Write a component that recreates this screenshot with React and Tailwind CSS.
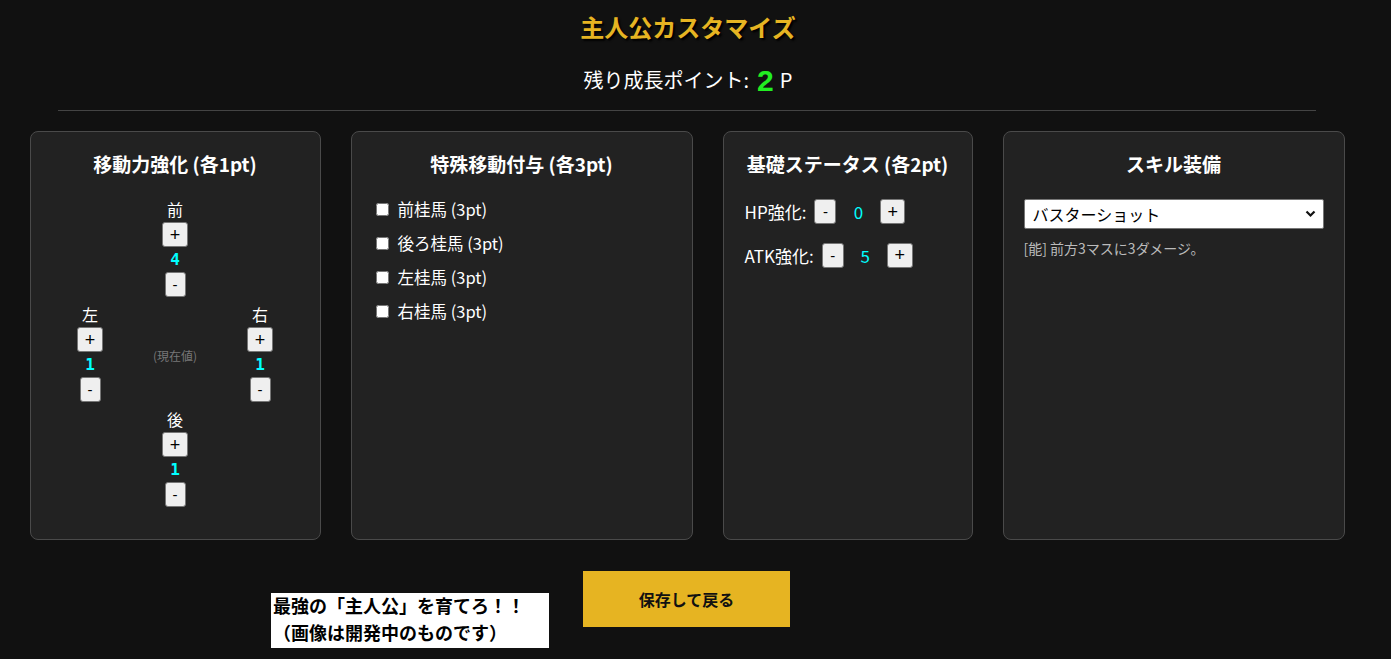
import React from "react";

const FONT = { fontFamily: '"Noto Sans CJK JP", "Noto Sans", sans-serif' };

function Btn({ children, w = "w-[26px]" }) {
  const plus = children === "+";
  return (
    <button
      className={`${w} h-[25px] flex items-center justify-center bg-[#efefef] border border-[#767676] rounded-[3px] ${plus ? "text-[18px]" : "text-[15px]"} leading-none text-black`}
      style={{ fontFamily: '"Liberation Sans", sans-serif' }}
    >
      {children}
    </button>
  );
}

function Dir({ label, value }) {
  return (
    <div className="flex flex-col items-center">
      <div className="text-[16px] leading-[20px] text-white">{label}</div>
      <div className="mt-[3px]"><Btn>+</Btn></div>
      <div className="h-[25px] flex items-center text-[16px] font-bold text-[#00ffff]" style={{ fontFamily: '"DejaVu Sans Mono", monospace' }}>{value}</div>
      <Btn w="w-[21px]">-</Btn>
    </div>
  );
}

function Card({ w, title, children }) {
  return (
    <div className={`${w} h-[409px] bg-[#222222] border border-[#4a4a4a] rounded-[8px] pt-[18px] flex flex-col`}>
      <h3 className="text-center text-[19px] leading-[28px] font-bold text-white">{title}</h3>
      {children}
    </div>
  );
}

export default function App() {
  return (
    <div className="w-full min-h-[659px] bg-[#111111] relative overflow-hidden" style={FONT}>
      <div className="w-[1376px] flex flex-col items-center">
        <h1 className="mt-[11px] text-[24px] leading-[32px] font-bold text-[#e6b422]" style={{ textShadow: "2px 2px 2px #000" }}>
          主人公カスタマイズ
        </h1>
        <div className="mt-[19px] h-[36px] flex items-center text-[20px] text-white">
          <span>残り成長ポイント:</span>
          <span className="ml-[8px] text-[30px] font-bold text-[#22ee22]" style={{ fontFamily: '"Liberation Sans", sans-serif' }}>2</span>
          <span className="ml-[6px]">P</span>
        </div>
        <div className="mt-[12px] self-start ml-[58px] w-[1258px] border-t border-[#444444]"></div>

        <div className="mt-[20px] mr-[2px] flex gap-[30px] justify-center">
          <Card w="w-[291px]" title="移動力強化 (各1pt)">
            <div className="mt-[21px] flex flex-col items-center gap-[7px]">
              <Dir label="前" value="4" />
              <div className="flex items-center">
                <div className="w-[60px] flex justify-center"><Dir label="左" value="1" /></div>
                <div className="w-[110px] text-center text-[12px] text-[#777777] pt-[6px]">(現在値)</div>
                <div className="w-[60px] flex justify-center"><Dir label="右" value="1" /></div>
              </div>
              <Dir label="後" value="1" />
            </div>
          </Card>

          <Card w="w-[342px]" title="特殊移動付与 (各3pt)">
            <div className="mt-[14px] pl-[24px] flex flex-col">
              {["前桂馬 (3pt)", "後ろ桂馬 (3pt)", "左桂馬 (3pt)", "右桂馬 (3pt)"].map((t) => (
                <label key={t} className="h-[34px] flex items-center gap-[9px] text-[16.5px] text-white">
                  <input type="checkbox" className="w-[13px] h-[13px] m-0" />
                  <span>{t}</span>
                </label>
              ))}
            </div>
          </Card>

          <Card w="w-[250px]" title="基礎ステータス (各2pt)">
            <div className="mt-[21px] px-[21px] flex flex-col gap-[18px]">
              <div className="flex items-center text-[17px] text-white">
                <span>HP強化:</span>
                <span className="ml-[8px]"><Btn w="w-[22px]">-</Btn></span>
                <span className="w-[44px] text-center text-[#00ffff]">0</span>
                <Btn w="w-[25px]">+</Btn>
              </div>
              <div className="flex items-center text-[17px] text-white">
                <span>ATK強化:</span>
                <span className="ml-[8px]"><Btn w="w-[22px]">-</Btn></span>
                <span className="w-[43px] text-center text-[#00ffff]">5</span>
                <Btn w="w-[26px]">+</Btn>
              </div>
            </div>
          </Card>

          <Card w="w-[342px]" title="スキル装備">
            <div className="mt-[21px] px-[20px]">
              <div className="relative h-[30px]">
                <select className="appearance-none w-full h-[30px] bg-white border border-[#767676] rounded-[2px] pl-[8px] text-[16px] text-black">
                  <option>バスターショット</option>
                </select>
                <svg className="absolute right-[8px] top-[11px] pointer-events-none" width="11" height="8" viewBox="0 0 11 8">
                  <path d="M1.5 1.5 L5.5 5.5 L9.5 1.5" fill="none" stroke="#111" strokeWidth="2.2" />
                </svg>
              </div>
              <p className="mt-[9px] text-[14px] leading-[20px] text-[#bbbbbb]">[能] 前方3マスに3ダメージ。</p>
            </div>
          </Card>
        </div>

        <button className="mt-[31px] mr-[3px] w-[207px] h-[56px] bg-[#e6b422] text-[16px] font-bold text-[#111111]">
          保存して戻る
        </button>
      </div>

      <div
        className="absolute left-[271px] top-[593px] w-[278px] h-[55px] bg-white text-black font-bold text-[18px] leading-[27px] pl-[2px] pt-[1px]"
        style={{ fontFamily: '"Liberation Serif", "Noto Sans CJK JP", serif' }}
      >
        <div>最強の「主人公」を育てろ！！</div>
        <div>（画像は開発中のものです）</div>
      </div>
    </div>
  );
}
